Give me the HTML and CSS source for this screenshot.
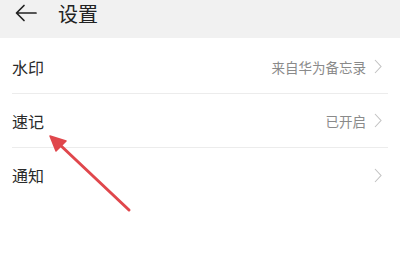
FILE: index.html
```html
<!DOCTYPE html>
<html lang="zh">
<head>
<meta charset="utf-8">
<link rel="stylesheet" href="styles.css">
</head>
<body>
<div class="screen">
  <header class="topbar">
    <svg class="back" width="24" height="18" viewBox="0 0 24 18"><path d="M22 9H3M10 1.5L2.5 9L10 16.5" fill="none" stroke="#222" stroke-width="1.7" stroke-linecap="round" stroke-linejoin="round"/></svg>
    <span class="title">设置</span>
  </header>
  <ul class="list">
    <li class="row"><span class="label">水印</span><span class="value">来自华为备忘录</span><svg class="chev" width="8" height="15" viewBox="0 0 8 15"><path d="M1 1l6 6.5L1 14" fill="none" stroke="#c2c2c2" stroke-width="1.1"/></svg></li>
    <li class="row"><span class="label">速记</span><span class="value">已开启</span><svg class="chev" width="8" height="15" viewBox="0 0 8 15"><path d="M1 1l6 6.5L1 14" fill="none" stroke="#c2c2c2" stroke-width="1.1"/></svg></li>
    <li class="row last"><span class="label">通知</span><span class="value"></span><svg class="chev" width="8" height="15" viewBox="0 0 8 15"><path d="M1 1l6 6.5L1 14" fill="none" stroke="#c2c2c2" stroke-width="1.1"/></svg></li>
  </ul>
  <svg class="annot" width="400" height="257" viewBox="0 0 400 257">
    <line x1="129" y1="210" x2="58" y2="143" stroke="#e0474c" stroke-width="3" stroke-linecap="round"/>
    <polygon points="50,136 66,141 56,151" fill="#e0474c" stroke="#e0474c" stroke-width="1.5" stroke-linejoin="round"/>
  </svg>
</div>
</body>
</html>
```
FILE: styles.css
```css
* { box-sizing: border-box; }
html, body { margin: 0; padding: 0; background: #fff; }
body { font-family: "Noto Sans CJK SC", "Noto Sans", sans-serif; }
.screen { position: relative; width: 400px; height: 257px; overflow: hidden; background: #fff; }
.topbar { height: 38px; background: #f1f1f1; display: flex; align-items: flex-start; padding: 3px 0 0 14px; }
.back { margin: 1px 20px 0 0; }
.title { font-size: 20px; color: #222; line-height: 22px; }
.list { list-style: none; margin: 0; padding: 2px 12px 0; }
.row { height: 54px; display: flex; align-items: center; border-bottom: 1px solid #ececec; }
.row.last { border-bottom: none; }
.label { font-size: 16px; color: #2a2a2a; flex: 1; }
.value { font-size: 13.5px; color: #8a8a8a; margin-right: 8px; }
.chev { margin-right: 6px; }
.annot { position: absolute; left: 0; top: 0; pointer-events: none; }
```
